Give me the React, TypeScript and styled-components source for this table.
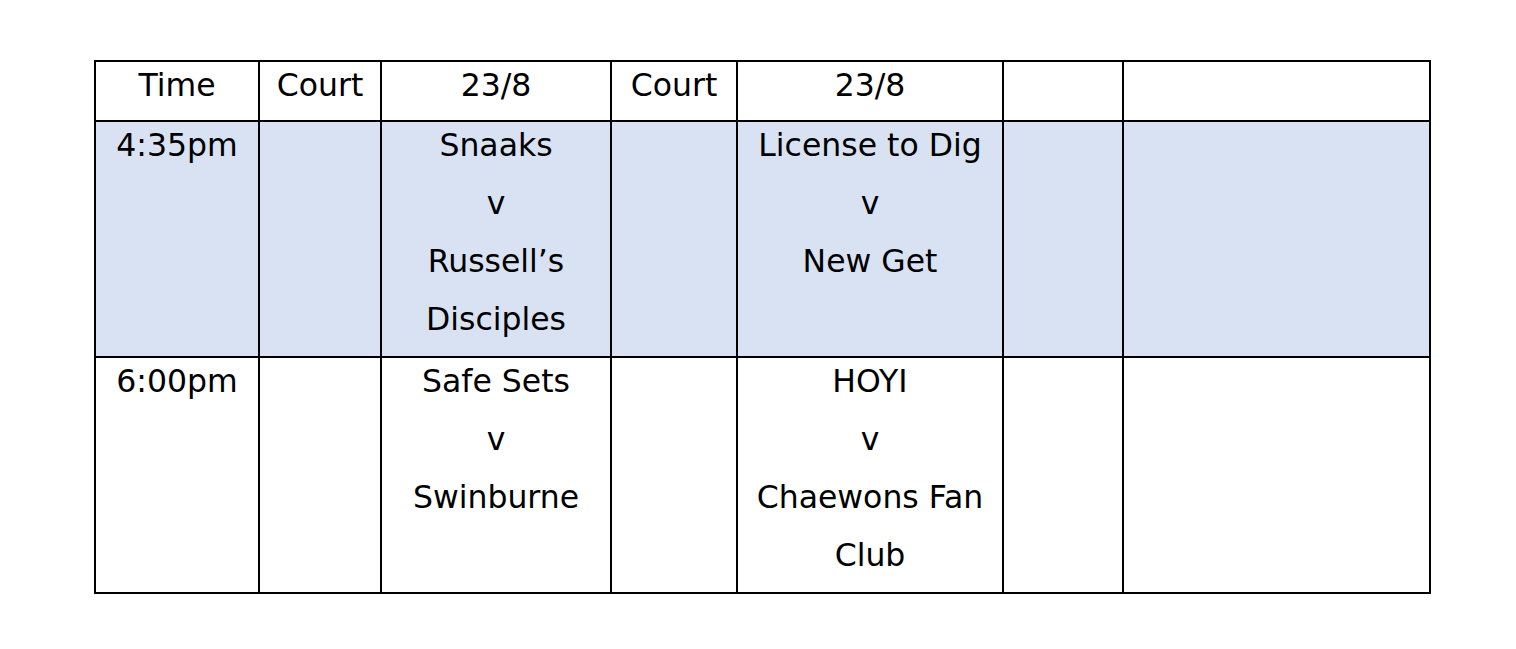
import React from 'react';
import styled, { createGlobalStyle } from 'styled-components';

const GlobalStyle = createGlobalStyle`
  html, body {
    margin: 0;
    padding: 0;
    background: #fff;
  }
  body {
    font-family: 'DejaVu Sans', Verdana, sans-serif;
    color: #000;
  }
`;

const Page = styled.div`
  padding: 60px 0 0 94px;
`;

const Table = styled.table`
  border-collapse: collapse;
  table-layout: fixed;
  width: 1335px;
  font-family: 'DejaVu Sans', Verdana, sans-serif;
  font-size: 31.5px;
`;

const Row = styled.tr<{ $shaded?: boolean }>`
  background: ${p => (p.$shaded ? '#d9e2f3' : '#fff')};
`;

const Cell = styled.td<{ $head?: boolean }>`
  border: 2px solid #000;
  padding: 0 4px ${p => (p.$head ? 6 : 8)}px;
  vertical-align: top;
  text-align: center;
`;

const Content = styled.div`
  margin-top: -6px;
  line-height: 58px;
`;

const widths = [164, 122, 230, 126, 266, 120, 307];

interface IRow {
  time: string;
  first: string[];
  second: string[];
}

const rows: IRow[] = [
  { time: '4:35pm', first: ['Snaaks', 'v', 'Russell’s Disciples'], second: ['License to Dig', 'v', 'New Get'] },
  { time: '6:00pm', first: ['Safe Sets', 'v', 'Swinburne'], second: ['HOYI', 'v', 'Chaewons Fan Club'] },
];

const Lines = ({ lines }: { lines: string[] }) => (
  <Content>
    {lines.map((l, i) => (
      <div key={i}>{l}</div>
    ))}
  </Content>
);

const App = () => {
  const header = ['Time', 'Court', '23/8', 'Court', '23/8', '', ''];
  return (
    <Page>
      <GlobalStyle />
      <Table>
        <colgroup>
          {widths.map((w, i) => (
            <col key={i} style={{ width: w }} />
          ))}
        </colgroup>
        <tbody>
          <Row>
            {header.map((h, i) => (
              <Cell key={i} $head>
                <Content>{h || '\u00a0'}</Content>
              </Cell>
            ))}
          </Row>
          {rows.map((r, i) => (
            <Row key={r.time} $shaded={i === 0}>
              <Cell>
                <Content>{r.time}</Content>
              </Cell>
              <Cell />
              <Cell>
                <Lines lines={r.first} />
              </Cell>
              <Cell />
              <Cell>
                <Lines lines={r.second} />
              </Cell>
              <Cell />
              <Cell />
            </Row>
          ))}
        </tbody>
      </Table>
    </Page>
  );
};

export default App;
